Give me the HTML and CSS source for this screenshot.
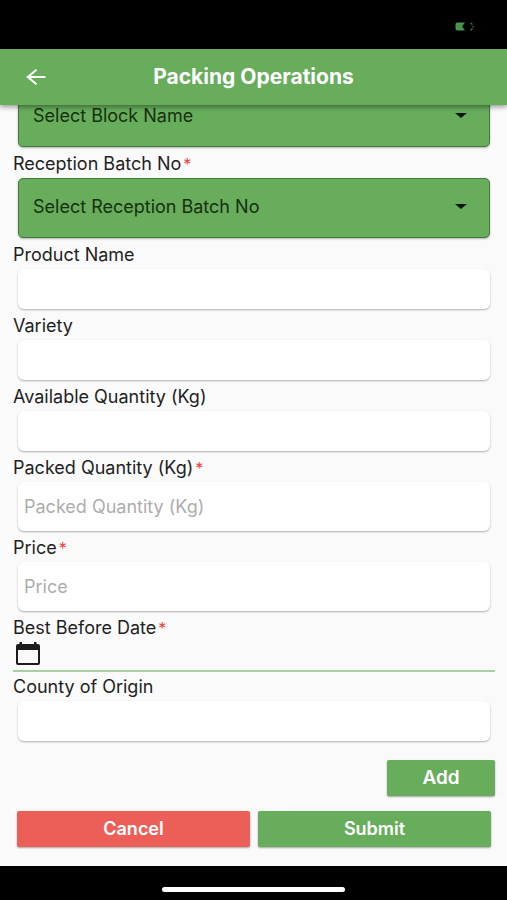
FILE: index.html
```html
<!DOCTYPE html>
<html lang="en">
<head>
<meta charset="utf-8">
<meta name="viewport" content="width=device-width, initial-scale=1">
<title>Packing Operations</title>
<link rel="stylesheet" href="styles.css">
</head>
<body>
<div class="status-bar">
  <svg class="battery" width="20" height="10" viewBox="0 0 20 10" aria-hidden="true">
    <path d="M2.500.5H10L7 4.500 10 8.500H2.500Q.5 8.500.5 6.500V2.500Q.5.5 2.500.5Z" fill="#499450"/>
    <path d="M15.500 1L17.500 2.500M17.500 6.500L15.500 8.500M18 4V5.500" stroke="#3c7d43" stroke-width="1.200" fill="none"/>
  </svg>
</div>
<header class="app-bar">
  <button class="back" type="button" aria-label="Back">
    <svg width="20" height="16" viewBox="0 0 20 16" aria-hidden="true"><path d="M19.500 8H2M10.500 .8L1.800 8L10.500 15.200" fill="none" stroke="#fff" stroke-width="2.100"/></svg>
  </button>
  <h1 class="title">Packing Operations</h1>
</header>
<main class="content">
  <form class="form">
    <div class="field field-scrolled">
      <div class="select-wrap">
        <select class="select" aria-label="Block Name"><option>Select Block Name</option></select>
        <svg class="caret" width="12" height="5" viewBox="0 0 12 5" aria-hidden="true"><path d="M0 0H12L6 5Z"/></svg>
      </div>
    </div>
    <div class="field">
      <label class="label" for="batch">Reception Batch No<span class="required">*</span></label>
      <div class="select-wrap">
        <select class="select" id="batch"><option>Select Reception Batch No</option></select>
        <svg class="caret" width="12" height="5" viewBox="0 0 12 5" aria-hidden="true"><path d="M0 0H12L6 5Z"/></svg>
      </div>
    </div>
    <div class="field">
      <label class="label" for="product">Product Name</label>
      <input class="input" id="product" type="text">
    </div>
    <div class="field">
      <label class="label" for="variety">Variety</label>
      <input class="input" id="variety" type="text">
    </div>
    <div class="field">
      <label class="label" for="available">Available Quantity (Kg)</label>
      <input class="input" id="available" type="text">
    </div>
    <div class="field">
      <label class="label" for="packed">Packed Quantity (Kg)<span class="required">*</span></label>
      <input class="input input-tall" id="packed" type="text" placeholder="Packed Quantity (Kg)">
    </div>
    <div class="field">
      <label class="label" for="price">Price<span class="required">*</span></label>
      <input class="input input-tall" id="price" type="text" placeholder="Price">
    </div>
    <div class="field">
      <label class="label" for="best-before">Best Before Date<span class="required">*</span></label>
      <div class="date-row">
        <svg width="26" height="24" viewBox="0 0 26 24" aria-hidden="true">
          <path d="M4.500 0H7V2H19V0H21.500V2H23Q25 2 25 4V21Q25 23 23 23H3Q1 23 1 21V4Q1 2 3 2H4.500ZM3 8V21H23V8Z" fill="#1b1b1b" fill-rule="evenodd"/>
        </svg>
        <input class="date-input" id="best-before" type="text">
      </div>
    </div>
    <div class="field">
      <label class="label label-tight" for="county">County of Origin</label>
      <input class="input" id="county" type="text">
    </div>
    <div class="add-row"><button class="button button-add" type="button">Add</button></div>
    <div class="actions">
      <button class="button button-cancel" type="button">Cancel</button>
      <button class="button" type="submit">Submit</button>
    </div>
  </form>
</main>
<footer class="home-area"><div class="home-bar"></div></footer>
</body>
</html>
```
FILE: styles.css
```css
:root {
  --green: #67ad5c;
}

* {
  box-sizing: border-box;
}

body {
  margin: 0;
  min-height: 100vh;
  display: flex;
  flex-direction: column;
  background: #fafafa;
  color: #1f1f1f;
  font: 18px/24px Inter, "Liberation Sans", sans-serif;
}

button,
input,
select {
  margin: 0;
  border: 0;
  font: inherit;
}

.status-bar {
  display: flex;
  align-items: center;
  justify-content: flex-end;
  height: 49px;
  padding: 4px 32px 0 0;
  background: #000;
}

.app-bar {
  position: relative;
  z-index: 1;
  display: grid;
  grid-template-columns: 48px 1fr 48px;
  align-items: center;
  height: 56px;
  padding: 0 12px;
  background: var(--green);
  box-shadow: 0 2px 5px rgba(0, 0, 0, 0.4);
}

.back {
  display: flex;
  align-items: center;
  justify-content: center;
  width: 48px;
  height: 48px;
  padding: 0;
  background: none;
}

.title {
  margin: 0;
  color: #fff;
  font-size: 21px;
  font-weight: 700;
  text-align: center;
}

.content {
  flex: 1;
  overflow: hidden;
}

.form {
  padding: 0 12px 19px 13px;
}

.field-scrolled {
  margin-top: -18px;
}

.label {
  display: block;
  padding: 5px 0 2px;
}

.label-tight {
  padding: 3px 0 2px;
}

.required {
  margin-left: 2px;
  color: #e8453c;
  font-size: 16px;
  line-height: 1;
}

.select-wrap {
  position: relative;
  margin: 0 5px;
}

.select {
  display: block;
  width: 100%;
  height: 60px;
  padding: 0 40px 3px 14px;
  appearance: none;
  border: 1px solid #457a3f;
  border-radius: 5px;
  background: var(--green);
  color: #17300f;
  box-shadow: 0 1px 2px rgba(0, 0, 0, 0.3);
}

.caret {
  position: absolute;
  top: 26px;
  right: 23px;
  fill: #0c160a;
  pointer-events: none;
}

.input {
  display: block;
  width: calc(100% - 10px);
  height: 40px;
  margin: 0 5px;
  padding: 0 6px;
  border-radius: 6px;
  background: #fff;
  color: #1f1f1f;
  box-shadow: 0 1px 2px rgba(0, 0, 0, 0.3);
}

.input-tall {
  height: 49px;
}

.input::placeholder {
  color: #adadad;
  opacity: 1;
}

.date-row {
  display: flex;
  align-items: center;
  gap: 8px;
  height: 30px;
  padding: 0 2px 4px;
  border-bottom: 2px solid #a9cfa5;
}

.date-input {
  flex: 1;
  min-width: 0;
  padding: 0;
  background: none;
}

.add-row {
  display: flex;
  justify-content: flex-end;
  margin: 19px 0 15px;
}

.actions {
  display: grid;
  grid-template-columns: 1fr 1fr;
  gap: 8px;
  padding: 0 4px;
}

.button {
  height: 36px;
  padding: 0 16px;
  border-radius: 2px;
  background: var(--green);
  color: #fff;
  font-weight: 600;
  box-shadow: 0 1px 2px rgba(0, 0, 0, 0.35);
}

.button-add {
  width: 108px;
  font-size: 19px;
}

.button-cancel {
  background: #ec5f59;
}

.home-area {
  display: flex;
  align-items: center;
  justify-content: center;
  height: 34px;
  padding-top: 13px;
  background: #000;
}

.home-bar {
  width: 36%;
  height: 5px;
  border-radius: 3px;
  background: #fff;
}
```
